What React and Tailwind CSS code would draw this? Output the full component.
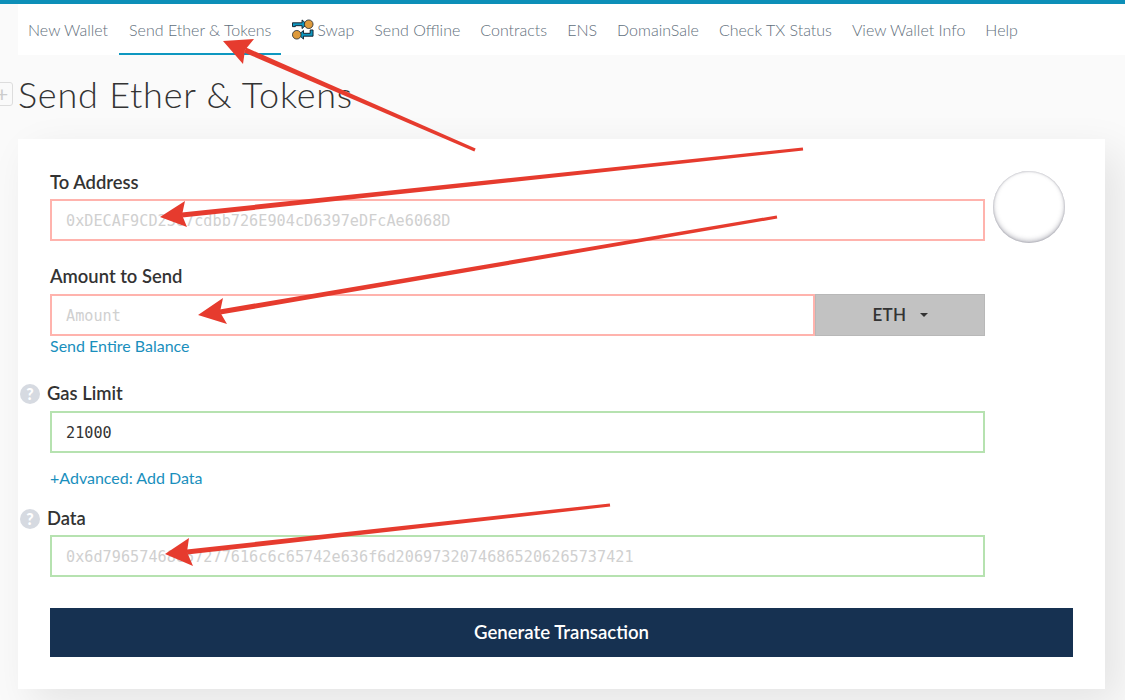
import React from 'react';

const lato = 'font-["Lato","Liberation_Sans",sans-serif]';

const navItems = ['New Wallet', 'Send Ether & Tokens', 'Swap', 'Send Offline', 'Contracts', 'ENS', 'DomainSale', 'Check TX Status', 'View Wallet Info', 'Help'];

function SwapIcon() {
  return (
    <svg width="22" height="21" viewBox="0 0 23 21" className="ml-[1px] mr-[3px] shrink-0">
      <path d="M0.5 3.5h10v-3l5 4.5-5 4.5v-3h-7v1h-3z" fill="#0e97c0" stroke="#14202c" strokeWidth="1" />
      <circle cx="17.5" cy="5" r="4.5" fill="#dd9a3c" stroke="#14202c" strokeWidth="0.8" />
      <path d="M22 11v6.5h-10v3l-5-4.5 5-4.5v3h7v-3.5z" fill="#0e97c0" stroke="#14202c" strokeWidth="1" />
      <circle cx="5" cy="16" r="4.5" fill="#dd9a3c" stroke="#14202c" strokeWidth="0.8" />
    </svg>
  );
}

function Help() {
  return (
    <span className={`flex h-5 w-5 shrink-0 items-center justify-center rounded-full bg-[#d6dae1] text-[16px] font-black leading-none text-white ${lato}`}>?</span>
  );
}

function Field({ border, placeholder, value }) {
  return (
    <div className={`flex h-[42px] items-center border-2 bg-white pl-[14px] pt-[2px] font-["DejaVu_Sans_Mono",monospace] text-[15.15px] tracking-[0.04px] ${border} ${value ? 'text-[#333]' : 'text-[#d0d0d0]'}`}>
      {value || placeholder}
    </div>
  );
}

// tail -> shaft that widens towards the notch, then the head
function Arrow({ tail, notch, tip, a, b }) {
  const dx = notch[0] - tail[0];
  const dy = notch[1] - tail[1];
  const len = Math.hypot(dx, dy);
  const nx = -dy / len;
  const ny = dx / len;
  const shaft = [
    [tail[0] + nx * 1.6, tail[1] + ny * 1.6],
    [notch[0] + nx * 2.6, notch[1] + ny * 2.6],
    [notch[0] - nx * 2.6, notch[1] - ny * 2.6],
    [tail[0] - nx * 1.6, tail[1] - ny * 1.6],
  ];
  return (
    <g fill="#e63b2e">
      <polygon points={shaft.map((p) => p.join(',')).join(' ')} />
      <polygon points={[tip, a, notch, b].map((p) => p.join(',')).join(' ')} />
    </g>
  );
}

export default function App() {
  return (
    <div className={`relative h-[700px] w-[1125px] overflow-hidden bg-[#fafafa] ${lato}`}>
      <div className="h-[4px] bg-[#0d8fb8]" />

      <nav className="ml-[18px] flex h-[51px] items-stretch bg-white pr-[20px] text-[16px] font-light text-[#5f6f7c]">
        {navItems.map((item, i) => (
          <div
            key={item}
            className={`flex items-center border-y-2 pl-[10px] ${i === 0 ? 'pr-[11px]' : 'pr-[10px]'} ${item === 'Send Ether & Tokens' ? 'border-t-transparent border-b-[#0e97c0]' : 'border-transparent'}`}
          >
            {item === 'Swap' && <SwapIcon />}
            {item}
          </div>
        ))}
      </nav>

      <div className="relative mt-[17px] h-[67px] pl-[18px]">
        <span className="absolute left-[-9px] top-[10px] flex h-[24px] w-[22px] items-center justify-center rounded-[3px] border border-[#ddd] text-[22px] leading-none text-[#ccc]">+</span>
        <h1 className="text-[36px] font-light leading-[44px] tracking-[0.78px] text-[#333]">Send Ether &amp; Tokens</h1>
      </div>

      <main className="ml-[18px] h-[550px] w-[1087px] bg-white px-[32px] pt-[32px] shadow-[14px_14px_40px_rgba(0,0,0,0.09)]">
        <div className="flex items-end gap-[8px]">
          <div className="w-[935px]">
            <label className="mb-[5px] block text-[18.4px] font-semibold leading-[23px] text-[#333]">To Address</label>
            <Field border="border-[#ffb3ad]" placeholder="0xDECAF9CD2367cdbb726E904cD6397eDFcAe6068D" />
          </div>
          <div className="mb-[-2px] h-[72px] w-[72px] rounded-full bg-white shadow-[inset_0_-2px_5px_rgba(60,60,80,0.35),inset_0_0_2px_rgba(60,60,80,0.4)]" />
        </div>

        <div className="w-[935px]">
          <label className="mb-[6px] mt-[24px] block text-[18.4px] font-semibold leading-[23px] text-[#333]">Amount to Send</label>
          <div className="flex">
            <div className="flex-1">
              <Field border="border-[#ffb3ad]" placeholder="Amount" />
            </div>
            <div className="flex w-[170px] items-center justify-center gap-[13px] border border-[#b8b8b8] bg-[#c2c2c2] text-[17px] font-semibold tracking-[0.4px] text-[#333]">
              ETH
              <span className="h-0 w-0 border-x-[4px] border-t-[4px] border-x-transparent border-t-[#333]" />
            </div>
          </div>
          <a className="block text-[16px] leading-[20px] text-[#1a8fbd]">Send Entire Balance</a>

          <div className="mb-[6px] ml-[-30px] mt-[26px] flex items-center gap-[7px]">
            <Help />
            <label className="text-[18.4px] font-semibold leading-[23px] text-[#333]">Gas Limit</label>
          </div>
          <Field border="border-[#b6e2b0]" value="21000" />
          <a className="mt-[14px] block text-[16px] leading-[22px] text-[#1a8fbd]">+Advanced: Add Data</a>

          <div className="mb-[5px] ml-[-30px] mt-[18px] flex items-center gap-[7px]">
            <Help />
            <label className="text-[18.4px] font-semibold leading-[23px] text-[#333]">Data</label>
          </div>
          <Field border="border-[#b6e2b0]" placeholder="0x6d79657468657277616c6c65742e636f6d20697320746865206265737421" />
        </div>

        <button className="mt-[31px] h-[49px] w-full bg-[#163151] text-[18.6px] font-semibold text-white">Generate Transaction</button>
      </main>

      <svg className="pointer-events-none absolute left-0 top-0" width="1125" height="700">
        <Arrow tail={[475, 150]} notch={[245, 50]} tip={[223, 41]} a={[254, 39]} b={[243, 64]} />
        <Arrow tail={[803, 149]} notch={[182, 215]} tip={[160, 217]} a={[185, 201]} b={[187, 227]} />
        <Arrow tail={[777, 217]} notch={[220, 312]} tip={[198, 315]} a={[223, 298]} b={[227, 324]} />
        <Arrow tail={[610, 505]} notch={[187, 552]} tip={[165, 554]} a={[189, 538]} b={[193, 566]} />
      </svg>
    </div>
  );
}
